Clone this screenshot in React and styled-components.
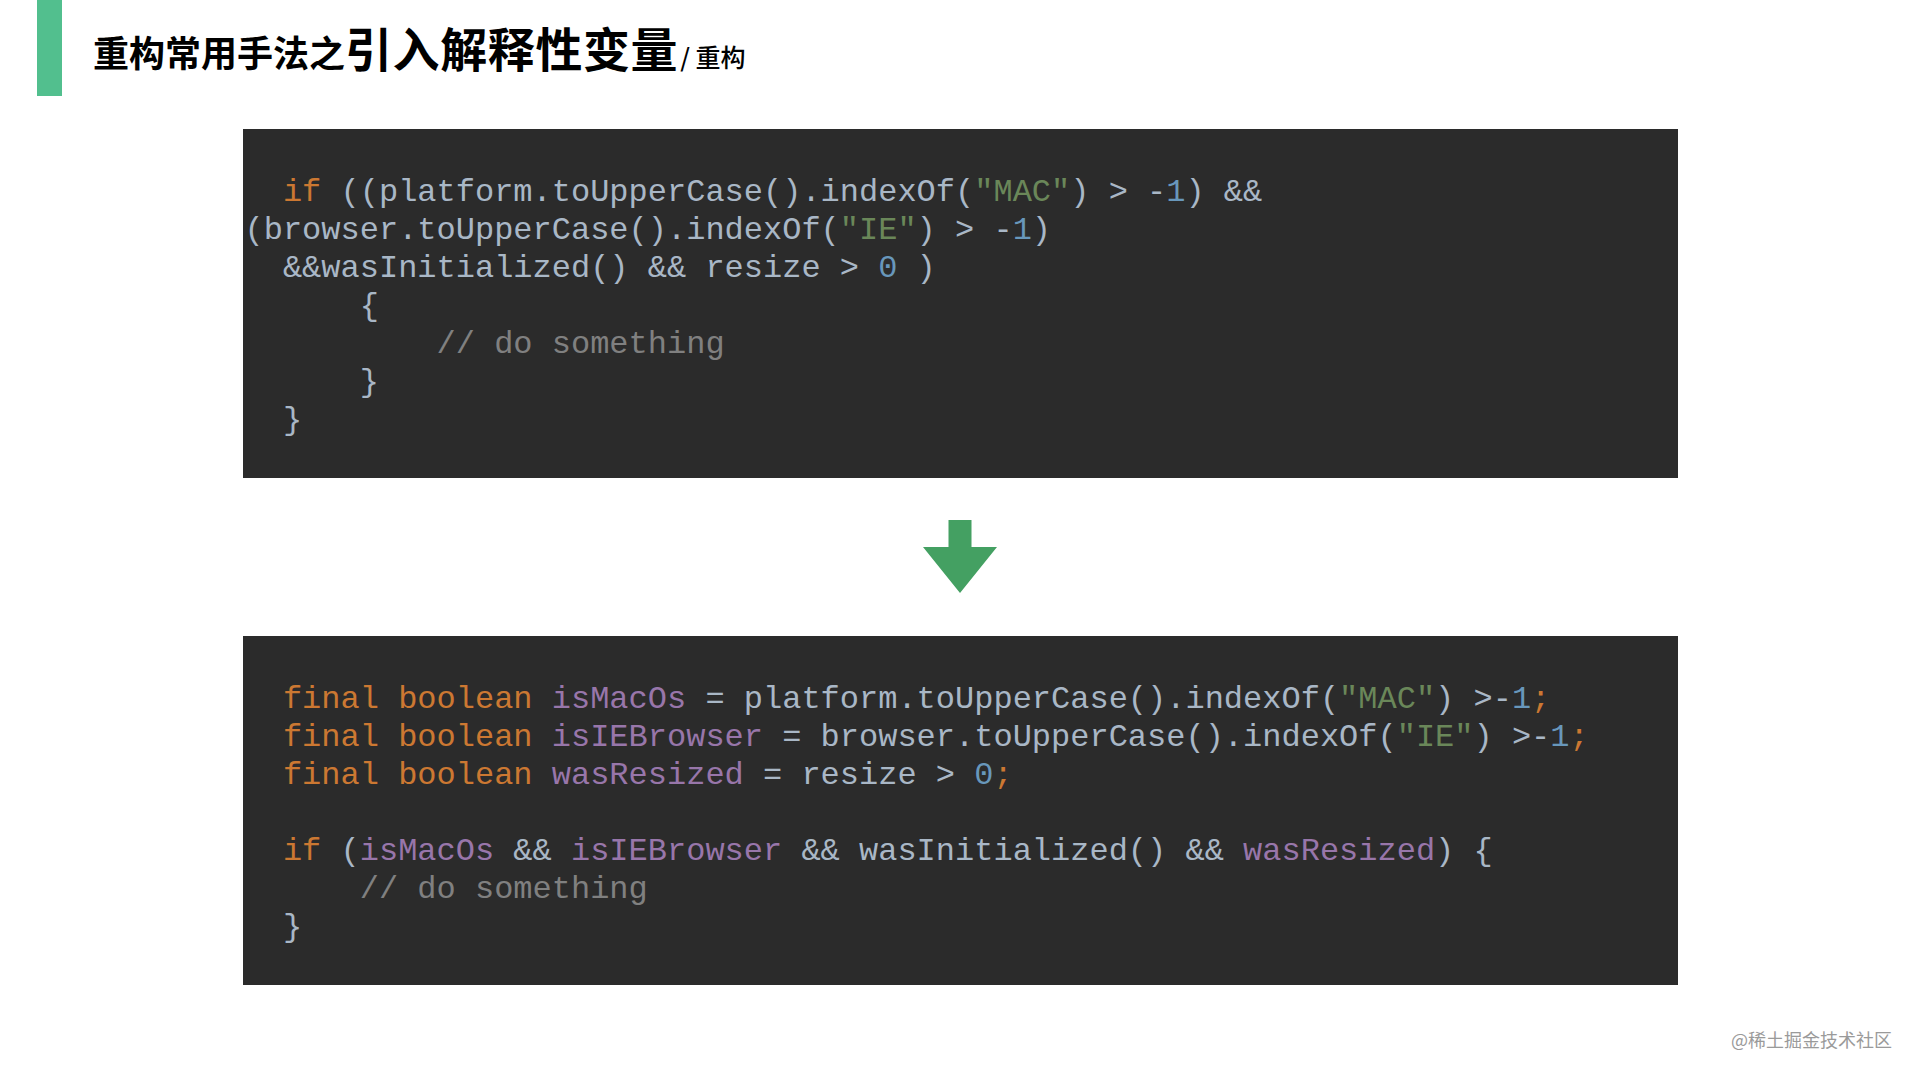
import React from 'react'
import styled, { createGlobalStyle } from 'styled-components'

const GlobalStyle = createGlobalStyle`
  html, body {
    margin: 0;
    padding: 0;
    background: #ffffff;
  }
  #root {
    width: 1920px;
    height: 1080px;
    position: relative;
    overflow: hidden;
  }
`;

const Page = styled.div`
  width: 1920px;
  height: 1080px;
  display: flex;
  flex-direction: column;
  background: #ffffff;
`;

const Header = styled.header`
  display: flex;
  align-items: flex-start;
  height: 96px;
  padding-left: 37px;
`;

const Bar = styled.div`
  width: 25px;
  height: 96px;
  background: #52bf8e;
`;

const Title = styled.h1`
  display: flex;
  align-items: baseline;
  margin: 23px 0 0 31px;
  font-family: "Noto Sans CJK SC", "Noto Sans", sans-serif;
  font-weight: 700;
  line-height: 1;
  color: #000000;
`;

const TitlePart = styled.span`
  font-size: ${p => p.$size}px;
  font-weight: ${p => p.$weight || 700};
  letter-spacing: ${p => p.$spacing || 0}px;
  margin-left: ${p => p.$gap || 0}px;
`;

const Main = styled.main`
  display: flex;
  flex-direction: column;
  align-items: center;
  padding-top: 33px;
`;

const CodeBox = styled.pre`
  box-sizing: border-box;
  width: 1435px;
  height: 349px;
  margin: 0;
  padding: 45px 0 0 2px;
  background: #2b2b2b;
  font-family: "Liberation Mono", "DejaVu Sans Mono", monospace;
  font-size: 32px;
  line-height: 38px;
  color: #a9b7c6;
  white-space: pre;
`;

const Line = styled.div`
  height: 38px;
`;

const tokenColors = {
  p: '#a9b7c6',
  kw: '#cc7832',
  num: '#6897bb',
  str: '#6a8759',
  field: '#9876aa',
  cm: '#808080',
};

const Tok = styled.span`
  color: ${p => tokenColors[p.$kind]};
`;

const ArrowWrap = styled.div`
  display: flex;
  justify-content: center;
  padding: 42px 0 43px;
`;

const Watermark = styled.div`
  position: absolute;
  right: 28px;
  bottom: 28px;
  font-family: "Noto Sans CJK SC", "Noto Sans", sans-serif;
  font-size: 18px;
  color: #9a9a9a;
  text-shadow: 0 0 1px #ffffff;
`;

const before = [
  [['p', '  '], ['kw', 'if'], ['p', ' ((platform.toUpperCase().indexOf('], ['str', '"MAC"'], ['p', ') > -'], ['num', '1'], ['p', ') &&']],
  [['p', '(browser.toUpperCase().indexOf('], ['str', '"IE"'], ['p', ') > -'], ['num', '1'], ['p', ')']],
  [['p', '  &&wasInitialized() && resize > '], ['num', '0'], ['p', ' )']],
  [['p', '      {']],
  [['cm', '          // do something']],
  [['p', '      }']],
  [['p', '  }']],
];

const after = [
  [['p', '  '], ['kw', 'final boolean '], ['field', 'isMacOs'], ['p', ' = platform.toUpperCase().indexOf('], ['str', '"MAC"'], ['p', ') >-'], ['num', '1'], ['kw', ';']],
  [['p', '  '], ['kw', 'final boolean '], ['field', 'isIEBrowser'], ['p', ' = browser.toUpperCase().indexOf('], ['str', '"IE"'], ['p', ') >-'], ['num', '1'], ['kw', ';']],
  [['p', '  '], ['kw', 'final boolean '], ['field', 'wasResized'], ['p', ' = resize > '], ['num', '0'], ['kw', ';']],
  [['p', ' ']],
  [['p', '  '], ['kw', 'if'], ['p', ' ('], ['field', 'isMacOs'], ['p', ' && '], ['field', 'isIEBrowser'], ['p', ' && wasInitialized() && '], ['field', 'wasResized'], ['p', ') {']],
  [['cm', '      // do something']],
  [['p', '  }']],
];

const Code = ({ lines }) => (
  <CodeBox>
    {lines.map((line, i) => (
      <Line key={i}>
        {line.map(([kind, text], j) => (
          <Tok key={j} $kind={kind}>{text}</Tok>
        ))}
      </Line>
    ))}
  </CodeBox>
);

const DownArrow = () => (
  <svg width="74" height="73" viewBox="0 0 74 73">
    <polygon points="25.5,0 48.5,0 48.5,27 74,27 37,73 0,27 25.5,27" fill="#44a062" />
  </svg>
);

export default function App() {
  return (
    <Page>
      <GlobalStyle />
      <Header>
        <Bar />
        <Title>
          <TitlePart $size={36}>重构常用手法之</TitlePart>
          <TitlePart $size={47} $spacing={0.6}>引入解释性变量</TitlePart>
          <TitlePart $size={25} $weight={500} $gap={2}>/ 重构</TitlePart>
        </Title>
      </Header>
      <Main>
        <Code lines={before} />
        <ArrowWrap>
          <DownArrow />
        </ArrowWrap>
        <Code lines={after} />
      </Main>
      <Watermark>@稀土掘金技术社区</Watermark>
    </Page>
  );
}
